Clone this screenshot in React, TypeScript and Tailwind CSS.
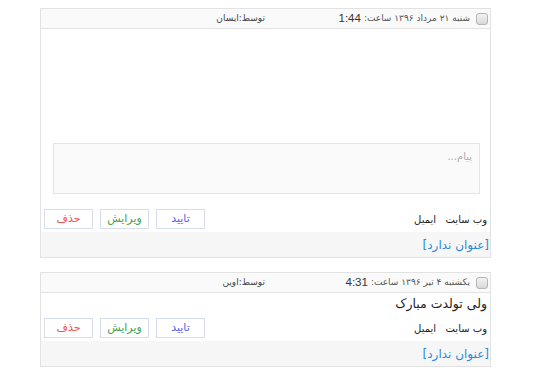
import React from 'react'

const fa = { fontFamily: '"DejaVu Sans", "Noto Sans", sans-serif' }

type Comment = {
  id: number
  date: string
  time: string
  author: string
  text?: string
  embed?: boolean
}

const comments: Comment[] = [
  { id: 1, date: 'شنبه ۲۱ مرداد ۱۳۹۶ ساعت:', time: '1:44', author: 'توسط:ایسان', embed: true },
  { id: 2, date: 'یکشنبه ۴ تیر ۱۳۹۶ ساعت:', time: '4:31', author: 'توسط:اوین', text: 'ولی تولدت مبارک' },
]

function Checkbox() {
  return (
    <span className="inline-block w-[12px] h-[12px] rounded-[3px] border border-[#b5b5b5] bg-gradient-to-b from-[#f2f2f2] to-[#d9d9d9] shrink-0" />
  )
}

function CommentCard({ c }: { c: Comment }) {
  return (
    <div dir="rtl" className="ml-[40px] w-[451px] border border-[#e2e2e2] bg-white" style={fa}>
      {/* header */}
      <div className="flex items-center h-[20px] bg-[#fafafa] border-b border-[#e2e2e2]">
        <div className="flex items-center w-[225px] pr-[2px]">
          <Checkbox />
          <span className="mr-[6px] text-[9px] text-[#555]">{c.date}</span>
          <span className="mr-[3px] text-[11.5px] text-[#333]" style={{ fontFamily: '"Liberation Sans", sans-serif' }}>{c.time}</span>
        </div>
        <span className="text-[9px] text-[#444]">{c.author}</span>
      </div>

      {c.embed ? (
        <>
          <div className="h-[114px]" />
          <div className="mr-[10px] ml-[12px] h-[51px] bg-[#fafafa] border border-[#e4e4e4] pr-[7px] pt-[5px] text-[10px] text-[#aaa]">
            پیام...
          </div>
        </>
      ) : (
        <div className="pr-[3px] pt-[2px] text-[12.5px] leading-[18px] text-[#222]">{c.text}</div>
      )}

      {/* actions */}
      <div className={`flex items-center justify-between pr-[3px] pl-[3px] ${c.embed ? 'pt-[15px] pb-[3px]' : 'pt-[5px] pb-[3px]'}`}>
        <span className="text-[10px] text-[#222] whitespace-pre">{'وب سایت   ایمیل'}</span>
        <div className="flex gap-[7px]">
          <button className="w-[49px] h-[20px] border border-[#d5deec] bg-white text-[11px] text-[#5b5bf0]">تایید</button>
          <button className="w-[49px] h-[20px] border border-[#d5deec] bg-white text-[11px] text-[#43a047]">ویرایش</button>
          <button className="w-[49px] h-[20px] border border-[#d5deec] bg-white text-[11px] text-[#f05050]">حذف</button>
        </div>
      </div>

      {/* footer */}
      <div className="h-[25px] flex items-center bg-[#f6f6f6] pr-[1px] text-[12px] text-[#2b8ad6]">
        [عنوان ندارد]
      </div>
    </div>
  )
}

export default function App() {
  return (
    <div className="w-[540px] h-[371px] bg-white pt-[8px]">
      <CommentCard c={comments[0]} />
      <div className="h-[14px]" />
      <CommentCard c={comments[1]} />
    </div>
  )
}
